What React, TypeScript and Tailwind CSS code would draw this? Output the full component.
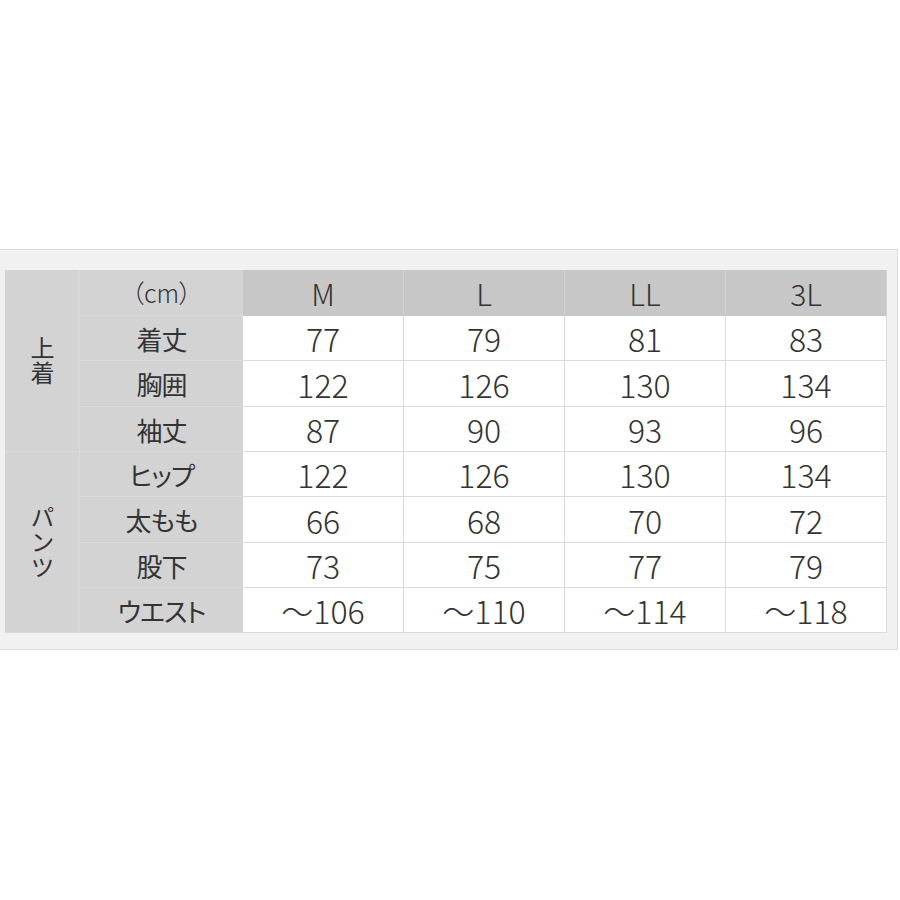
const sizes = ['M', 'L', 'LL', '3L'];

const rows = [
  { label: '着丈', values: ['77', '79', '81', '83'] },
  { label: '胸囲', values: ['122', '126', '130', '134'] },
  { label: '袖丈', values: ['87', '90', '93', '96'] },
  { label: 'ヒップ', values: ['122', '126', '130', '134'] },
  { label: '太もも', values: ['66', '68', '70', '72'] },
  { label: '股下', values: ['73', '75', '77', '79'] },
  { label: 'ウエスト', values: ['～106', '～110', '～114', '～118'] },
];

const font = "font-['Noto_Sans_CJK_JP','Noto_Sans',sans-serif]";

function Group({ text, rowClass }: { text: string; rowClass: string }) {
  return (
    <div className={`${rowClass} col-start-1 flex items-center justify-center border-b border-r border-[#dbdbdb] bg-[#d3d3d3] text-[#333]`}>
      <span className="text-[24px] leading-none tracking-[1px] [writing-mode:vertical-rl]">{text}</span>
    </div>
  );
}

export default function App() {
  return (
    <div className={`h-[900px] w-[900px] bg-white pt-[249px] ${font}`}>
      <div className="w-[898px] border-y border-r border-[#dcdcdc] bg-[#f1f1f1] pb-[16px] pl-[5px] pt-[20px]">
        <div className="grid grid-cols-[75px_163px_161px_161px_161px_161px] grid-rows-[46px_45px_46px_45px_45px_46px_45px_45px] w-[882px] text-[#333]">
          <Group text="上着" rowClass="row-start-1 row-span-4" />
          <Group text="パンツ" rowClass="row-start-5 row-span-4" />

          <div className="col-start-2 row-start-1 flex items-center justify-center border-b border-[#dcdcdc] bg-[#d3d3d3] text-[25px] font-light [font-feature-settings:'palt']">
            （cm）
          </div>
          {sizes.map((s) => (
            <div key={s} className="row-start-1 flex items-center justify-center border-r border-[#d2d2d2] bg-[#c7c7c7] text-[30px] font-light leading-none last:border-r-0">
              {s}
            </div>
          ))}

          {rows.map((row) => (
            <div key={row.label} className="contents">
              <div className="col-start-2 flex items-center justify-center border-b border-[#dcdcdc] bg-[#d3d3d3] text-[26px] tracking-[-1px] [font-feature-settings:'palt'] last:border-b-0">
                {row.label}
              </div>
              {row.values.map((v, i) => (
                <div key={i} className="flex items-center justify-center border-b border-r border-[#dcdcdc] bg-white text-[32px] font-light leading-none [font-feature-settings:'palt']">
                  {v}
                </div>
              ))}
            </div>
          ))}
        </div>
      </div>
    </div>
  );
}
